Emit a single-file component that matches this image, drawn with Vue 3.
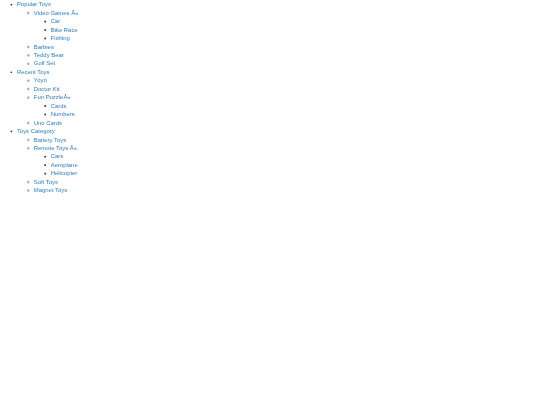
<template>
	<div class="page">
		<ul class="menu">
			<li v-for="top in menu" :key="top.name">
				<a href="#">{{ top.name }}</a>
				<ul>
					<li v-for="item in top.items" :key="item.name">
						<a href="#">{{ item.name }}</a>
						<ul v-if="item.items">
							<li v-for="sub in item.items" :key="sub"><a href="#">{{ sub }}</a></li>
						</ul>
					</li>
				</ul>
			</li>
		</ul>
	</div>
</template>

<script setup>
	const menu = [
		{
			name: 'Popular Toys',
			items: [
				{ name: 'Video Games Â»', items: ['Car', 'Bike Race', 'Fishing'] },
				{ name: 'Barbies' },
				{ name: 'Teddy Bear' },
				{ name: 'Golf Set' }
			]
		},
		{
			name: 'Recent Toys',
			items: [
				{ name: 'Yoyo' },
				{ name: 'Doctor Kit' },
				{ name: 'Fun PuzzleÂ»', items: ['Cards', 'Numbers'] },
				{ name: 'Uno Cards' }
			]
		},
		{
			name: 'Toys Category',
			items: [
				{ name: 'Battery Toys' },
				{ name: 'Remote Toys Â»', items: ['Cars', 'Aeroplane', 'Helicopter'] },
				{ name: 'Soft Toys' },
				{ name: 'Magnet Toys' }
			]
		}
	];
</script>

<style scoped>
	.page {
		height: 405px;
		overflow: hidden;
		background: #ffffff;
		filter: blur(0.5px);
	}

	ul {
		margin: 0;
		padding-left: 40px;
	}

	/* the page is shown at 540 wide, so draw at full size and scale down */
	.menu {
		font-family: "Liberation Sans", Arial, sans-serif;
		font-size: 14px;
		line-height: 20px;
		color: #333333;
		width: 1280px;
		transform: scale(0.4225);
		transform-origin: top left;
	}

	a {
		color: #2a7fc4;
		text-decoration: none;
	}
</style>
